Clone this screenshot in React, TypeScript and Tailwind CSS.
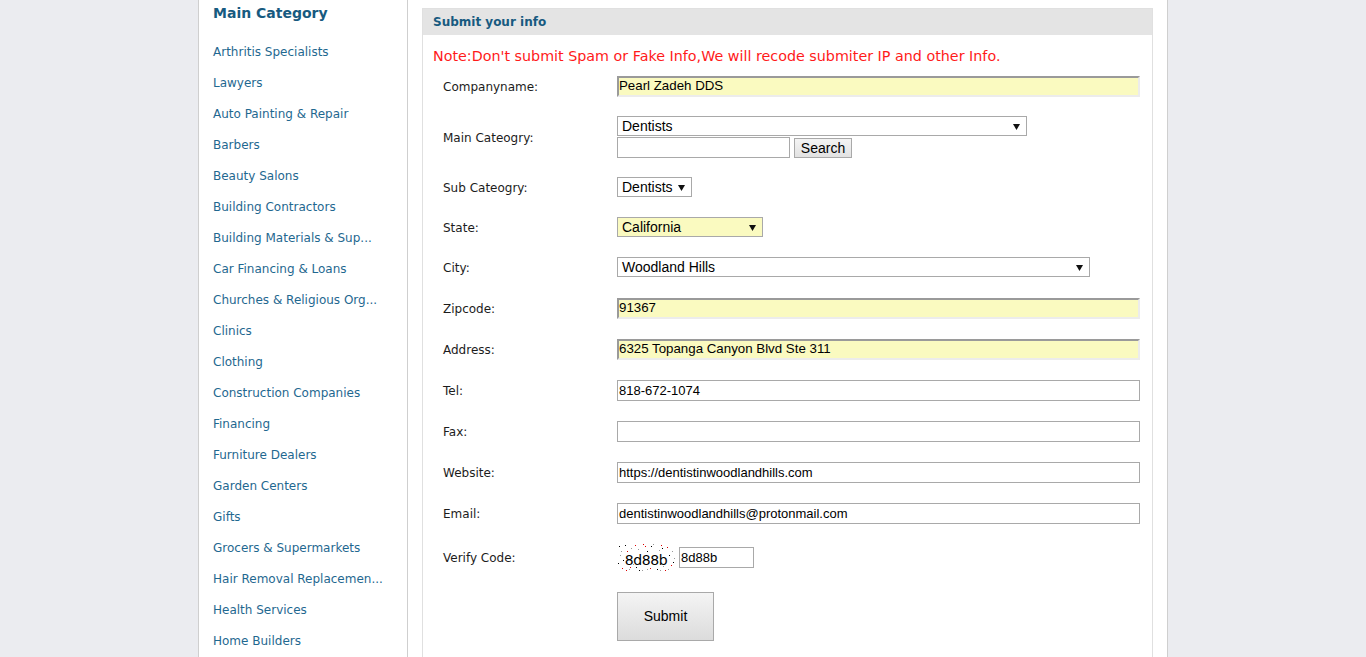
import type { ReactNode } from 'react';

const CATEGORIES = [
  'Arthritis Specialists',
  'Lawyers',
  'Auto Painting & Repair',
  'Barbers',
  'Beauty Salons',
  'Building Contractors',
  'Building Materials & Sup...',
  'Car Financing & Loans',
  'Churches & Religious Org...',
  'Clinics',
  'Clothing',
  'Construction Companies',
  'Financing',
  'Furniture Dealers',
  'Garden Centers',
  'Gifts',
  'Grocers & Supermarkets',
  'Hair Removal Replacemen...',
  'Health Services',
  'Home Builders',
];

function Arrow() {
  return (
    <svg width="7" height="7" viewBox="0 0 7 7" className="shrink-0">
      <polygon points="0,1 7,1 3.5,7" fill="#111" />
    </svg>
  );
}

type FakeSelectProps = {
  value: string;
  width: string;
  yellow?: boolean;
};

function FakeSelect({ value, width, yellow }: FakeSelectProps) {
  return (
    <div
      className={`flex h-[20px] items-center justify-between border border-[#a9a9a9] pl-[4px] pr-[6px] font-['Liberation_Sans',Arial,sans-serif] text-[14px] leading-none text-black ${width} ${
        yellow ? 'bg-[#fafac0]' : 'bg-white'
      }`}
    >
      <span>{value}</span>
      <Arrow />
    </div>
  );
}

function YellowInput({ value }: { value: string }) {
  return (
    <div className="flex h-[21px] w-[523px] items-center border-2 border-t-[#9a9a9a] border-l-[#9a9a9a] border-r-[#ececec] border-b-[#ececec] bg-[#fafac0] font-['Liberation_Sans',Arial,sans-serif] text-[13.3px] leading-none text-black">
      {value}
    </div>
  );
}

function PlainInput({ value, width = 'w-[523px]' }: { value?: string; width?: string }) {
  return (
    <div
      className={`flex h-[21px] items-center border border-[#a9a9a9] bg-white pl-[1px] font-['Liberation_Sans',Arial,sans-serif] text-[13px] leading-none text-black ${width}`}
    >
      {value}
    </div>
  );
}

type RowProps = {
  label: string;
  height: string;
  children: ReactNode;
};

function Row({ label, height, children }: RowProps) {
  return (
    <div className={`grid grid-cols-[174px_1fr] items-center ${height}`}>
      <div className="pt-[2px] text-[12px] text-[#1c1c1c]">{label}</div>
      <div>{children}</div>
    </div>
  );
}

// static "8d88b" code image with speckle noise
function Captcha() {
  const dots = [
    [2, 3, '#000'], [8, 2, '#000'], [14, 5, '#999'], [26, 1, '#d00'], [34, 3, '#000'], [44, 2, '#d00'],
    [50, 4, '#d00'], [55, 8, '#999'], [3, 12, '#999'], [1, 20, '#000'], [5, 25, '#d00'], [12, 26, '#999'],
    [19, 24, '#000'], [25, 27, '#999'], [33, 25, '#d00'], [40, 26, '#000'], [46, 23, '#999'], [54, 22, '#d00'],
    [57, 15, '#999'], [52, 12, '#000'], [10, 8, '#d00'], [42, 7, '#999'], [30, 8, '#000'], [21, 6, '#999'],
    [48, 27, '#d00'], [16, 21, '#999'], [38, 21, '#999'], [6, 17, '#000'], [28, 3, '#d00'], [36, 1, '#999'],
    [45, 5, '#000'], [9, 27, '#d00'], [22, 27, '#000'], [30, 26, '#999'], [51, 26, '#999'], [56, 19, '#000'],
    [4, 8, '#999'], [18, 2, '#d00'], [13, 24, '#d00'], [43, 27, '#999'],
  ] as const;
  return (
    <div className="relative flex h-[29px] w-[58px] items-center justify-center bg-white">
      <svg width="58" height="29" className="absolute inset-0">
        {dots.map(([x, y, c], i) => (
          <rect key={i} x={x} y={y} width="1" height="1" fill={c} />
        ))}
      </svg>
      <span className="relative mt-[5px] font-['DejaVu_Sans',Verdana,sans-serif] text-[14px] leading-none tracking-[-0.4px] text-black">
        8d88b
      </span>
    </div>
  );
}

export default function App() {
  return (
    <div className="min-h-screen bg-[#ebecf0] font-['DejaVu_Sans',Verdana,sans-serif]">
      <div className="mx-auto flex min-h-screen w-[970px] border-x border-[#cfcfcf] bg-white">
        {/* category sidebar */}
        <aside className="w-[209px] shrink-0 border-r border-[#cfcfcf] pl-[14px]">
          <h2 className="pt-[4px] text-[14px] font-bold leading-[18px] text-[#175a80]">Main Category</h2>
          <ul className="mt-[15px]">
            {CATEGORIES.map((name) => (
              <li key={name} className="h-[31px] text-[12px] leading-[31px] text-[#1f6890]">
                {name}
              </li>
            ))}
          </ul>
        </aside>

        {/* submission form */}
        <main className="flex-1 px-[14px] pt-[8px]">
          <div className="border border-[#e0e0e0] pb-[30px]">
            <div className="flex h-[26px] items-center bg-[#e4e4e4] pl-[10px] text-[12px] font-bold text-[#175a80]">
              Submit your info
            </div>
            <div className="pl-[10px]">
              <p className="mt-[11px] flex h-[21px] items-center text-[14.3px] text-[#ff1a1a]">
                Note:Don't submit Spam or Fake Info,We will recode submiter IP and other Info.
              </p>
              <div className="pl-[10px]">
                <Row label="Companyname:" height="h-[38px]">
                  <YellowInput value="Pearl Zadeh DDS" />
                </Row>
                <Row label="Main Cateogry:" height="h-[64px]">
                  <div className="flex flex-col gap-[1px]">
                    <FakeSelect value="Dentists" width="w-[410px]" />
                    <div className="flex items-center gap-[4px]">
                      <PlainInput width="w-[173px]" />
                      <button className="h-[20px] w-[58px] border border-[#a9a9a9] bg-gradient-to-b from-[#f4f4f4] to-[#e2e2e2] font-['Liberation_Sans',Arial,sans-serif] text-[14px] leading-none text-black">
                        Search
                      </button>
                    </div>
                  </div>
                </Row>
                <Row label="Sub Cateogry:" height="h-[36px]">
                  <FakeSelect value="Dentists" width="w-[75px]" />
                </Row>
                <Row label="State:" height="h-[44px]">
                  <FakeSelect value="California" width="w-[146px]" yellow />
                </Row>
                <Row label="City:" height="h-[36px]">
                  <FakeSelect value="Woodland Hills" width="w-[473px]" />
                </Row>
                <Row label="Zipcode:" height="h-[46px]">
                  <YellowInput value="91367" />
                </Row>
                <Row label="Address:" height="h-[36px]">
                  <YellowInput value="6325 Topanga Canyon Blvd Ste 311" />
                </Row>
                <Row label="Tel:" height="h-[46px]">
                  <PlainInput value="818-672-1074" />
                </Row>
                <Row label="Fax:" height="h-[36px]">
                  <PlainInput />
                </Row>
                <Row label="Website:" height="h-[46px]">
                  <PlainInput value="https://dentistinwoodlandhills.com" />
                </Row>
                <Row label="Email:" height="h-[36px]">
                  <PlainInput value="dentistinwoodlandhills@protonmail.com" />
                </Row>
                <Row label="Verify Code:" height="h-[52px]">
                  <div className="flex items-center gap-[4px]">
                    <Captcha />
                    <PlainInput value="8d88b" width="w-[75px]" />
                  </div>
                </Row>
                <Row label="" height="h-[66px]">
                  <button className="h-[49px] w-[97px] border border-[#a9a9a9] bg-gradient-to-b from-[#f4f4f4] to-[#dcdcdc] font-['Liberation_Sans',Arial,sans-serif] text-[14px] text-black">
                    Submit
                  </button>
                </Row>
              </div>
            </div>
          </div>
        </main>
      </div>
    </div>
  );
}
